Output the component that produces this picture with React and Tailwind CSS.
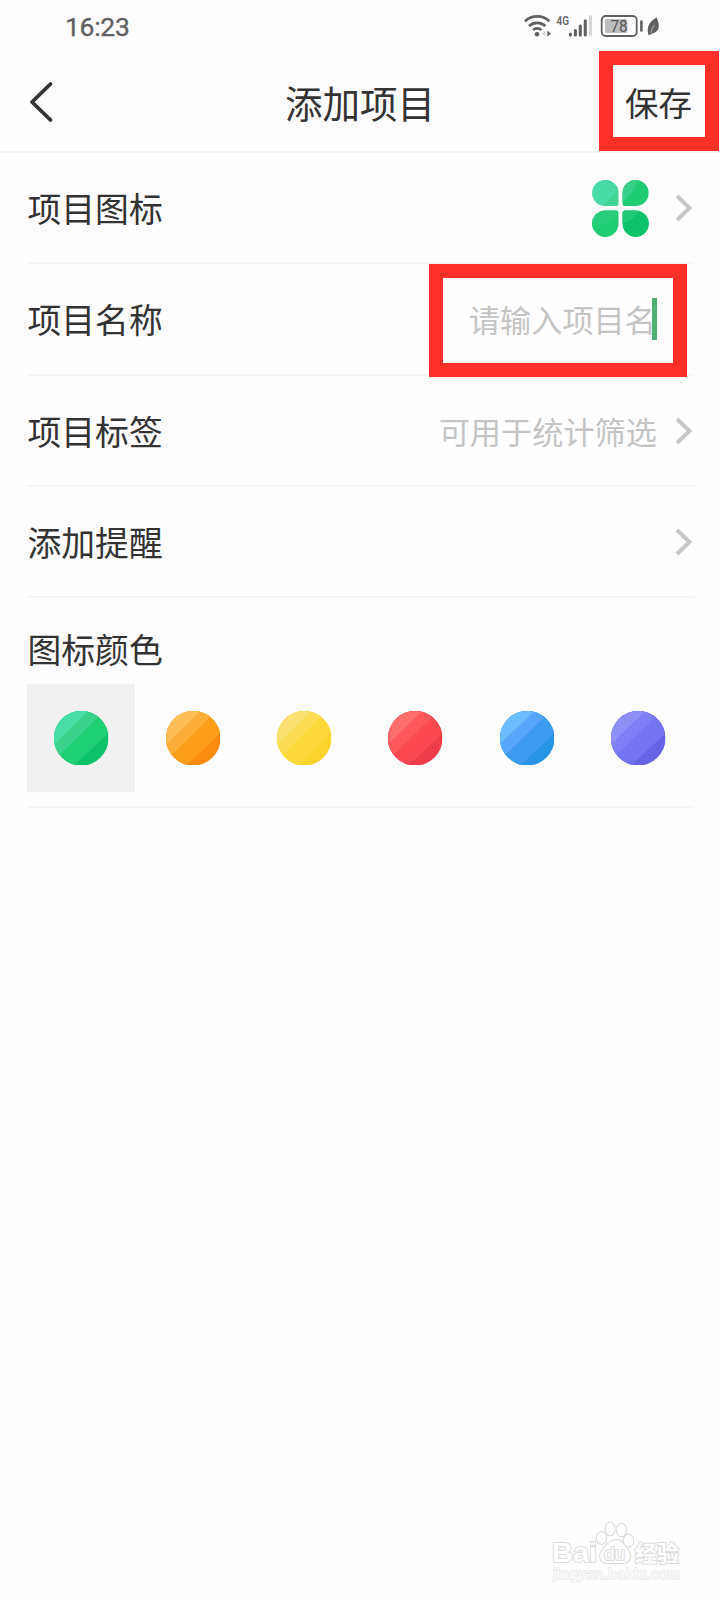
import { useState } from "react";
import clsx from "clsx";

const colors = [
  { name: "green", stops: ["#49dea8", "#3bd28c", "#1fcf73", "#0ac269"] },
  { name: "orange", stops: ["#fdbf58", "#fdae3a", "#fb9f1b", "#fd8a11"] },
  { name: "yellow", stops: ["#fbe172", "#fedd54", "#fdd83a", "#fcd22c"] },
  { name: "red", stops: ["#ff6d6c", "#fe585c", "#fb4852", "#ef3c4b"] },
  { name: "blue", stops: ["#6bbdff", "#56a7fb", "#3c9bee", "#2794e4"] },
  { name: "purple", stops: ["#8f8ff8", "#8080f6", "#7473f0", "#6763e4"] },
];

function StatusBar() {
  return (
    <div className="flex h-[52px] shrink-0 items-center pl-[65px] pr-[59px] text-[#606060]">
      <span className="mt-[3px] font-[Roboto,sans-serif] text-[26.5px] leading-none tracking-[-0.3px] [-webkit-text-stroke:0.3px_#606060]">
        16:23
      </span>
      <svg
        className="ml-auto h-[30px] w-[137px]"
        viewBox="524 11 137 30"
        fill="none"
      >
        <g stroke="#616161" strokeWidth="2.7">
          <path d="M525 21.2c6.800-6.400 17.600-6.400 24.400 0" />
          <path d="M529 26c4.700-4.200 11.700-4.200 16.400 0" />
          <path d="M533 30c2.600-2 5.900-2 8.500 0" />
        </g>
        <circle cx="537" cy="34.200" r="2.300" fill="#616161" />
        <path d="M545.500 31v5l-3.500-2.500z" fill="#cfcfcf" />
        <path d="M547.300 30.500v6.300l3.700-3.100z" fill="#616161" />
        <text
          x="556.500"
          y="24.600"
          fontSize="13.500"
          fontWeight="600"
          textLength="12.500"
          lengthAdjust="spacingAndGlyphs"
          fontFamily="Roboto, sans-serif"
          fill="#666"
        >
          4G
        </text>
        <g strokeWidth="3.100" strokeLinecap="round">
          <path
            d="M570.400 34v1M575.400 30.500v4.500M580.300 26v9M585.300 20.800V35"
            stroke="#616161"
          />
          <path d="M590.400 16.500V35" stroke="#d5d5d5" />
        </g>
        <rect
          x="601.700"
          y="16"
          width="35"
          height="20"
          rx="4"
          stroke="#616161"
          strokeWidth="1.800"
        />
        <rect x="605" y="19" width="22.500" height="14" rx="2" fill="#bdbdbd" />
        <text
          x="619"
          y="32.200"
          fontSize="16"
          textAnchor="middle"
          textLength="17"
          lengthAdjust="spacingAndGlyphs"
          fontFamily="Roboto, sans-serif"
          fill="#555"
        >
          78
        </text>
        <path
          d="M641.400 21.500v9"
          stroke="#616161"
          strokeWidth="2.600"
          strokeLinecap="round"
        />
        <path
          d="M656.500 17.500c3.500 6.500 3.500 14-3 15.500l-4.800 2.200c-1.800-5.200-2.200-11.700 7.800-17.700z"
          fill="#616161"
        />
        <path d="M650.800 33c.4-3 1.700-5.500 3.700-8" stroke="#e4e4e4" strokeWidth=".7" />
      </svg>
    </div>
  );
}

function Chevron() {
  return (
    <svg className="h-[28px] w-[18px]" viewBox="0 0 18 28" fill="none">
      <path d="M2 2l12.500 12L2 26" stroke="#c7c7c7" strokeWidth="4" />
    </svg>
  );
}

function CloverIcon() {
  return (
    <svg className="h-[57px] w-[57px]" viewBox="0 0 57 57">
      <defs>
        <clipPath id="petalA">
          <path d="M13.300 0A13.200 13.200 0 0 1 26.500 13.200V23.500a2.500 2.500 0 0 1-2.500 2.500H13.300A13 13 0 0 1 13.300 0z" />
        </clipPath>
        <clipPath id="petalB">
          <path d="M43.700 0A13 13 0 0 1 43.700 26H33a2.500 2.500 0 0 1-2.500-2.500V13.200A13.200 13.200 0 0 1 43.700 0z" />
        </clipPath>
        <clipPath id="petalC">
          <path d="M13.300 30.500H24a2.500 2.500 0 0 1 2.500 2.500V43.700A13.200 13.200 0 1 1 13.300 30.500z" />
        </clipPath>
        <clipPath id="petalD">
          <path d="M33 30.500H43.700A13.200 13.200 0 1 1 30.500 43.700V33a2.500 2.500 0 0 1 2.500-2.500z" />
        </clipPath>
      </defs>
      <g clipPath="url(#petalA)">
        <path d="M0 0h27v27H0z" fill="#40d497" />
        <path d="M0 0h27v9L9 27H0z" fill="#49dba7" />
      </g>
      <g clipPath="url(#petalB)">
        <path d="M30 0h27v27H30z" fill="#1fcc72" />
        <path d="M30 0h15q-3 14-15 22z" fill="#38d089" />
      </g>
      <g clipPath="url(#petalC)">
        <path d="M0 30h27v27H0z" fill="#1fcd72" />
        <path d="M0 30h27q-8 14-27 17z" fill="#28ce79" />
      </g>
      <g clipPath="url(#petalD)">
        <path d="M30 30h27v27H30z" fill="#0bc268" />
        <path d="M30 30h19q-7 10-19 14z" fill="#1dc973" />
      </g>
    </svg>
  );
}

function Row({ label, children }) {
  return (
    <div className="relative flex h-[111.3px] items-center border-b-2 border-[#f6f6f6] pt-[1px]">
      <span className="pl-[0.5px] text-[33.800px] leading-[40px]">{label}</span>
      <div className="ml-auto flex items-center">{children}</div>
    </div>
  );
}

function ColorDot({ name, stops }) {
  return (
    <svg className="h-[54.500px] w-[54.500px]" viewBox="0 0 54 54">
      <clipPath id={`dot-${name}`}>
        <circle cx="27" cy="27" r="27" />
      </clipPath>
      <g clipPath={`url(#dot-${name})`}>
        <path d="M0 0h54v54H0z" fill={stops[3]} />
        <path d="M0 0h54v22L20 54H0z" fill={stops[2]} />
        <path d="M0 0h50L0 49z" fill={stops[1]} />
        <path d="M0 0h34L0 33z" fill={stops[0]} />
      </g>
    </svg>
  );
}

function Watermark() {
  return (
    <svg
      className="absolute bottom-[12px] right-[36px] h-[70px] w-[134px]"
      viewBox="550 1518 134 70"
      fill="#fff"
      stroke="#dcdcdc"
      strokeWidth="1.100"
    >
      <g fontWeight="700" strokeWidth="2" paintOrder="stroke">
        <text
          x="552"
          y="1562"
          fontSize="28.500"
          textLength="45"
          lengthAdjust="spacingAndGlyphs"
          fontFamily="Liberation Sans, sans-serif"
        >
          Bai
        </text>
        <text
          x="635"
          y="1560.500"
          fontSize="22"
          textLength="44"
          fontFamily="Noto Sans CJK SC, sans-serif"
        >
          经验
        </text>
      </g>
      <ellipse cx="601.500" cy="1538" rx="5.200" ry="6.500" />
      <ellipse cx="610" cy="1529" rx="5" ry="6.800" />
      <ellipse cx="621.500" cy="1530" rx="5" ry="6.800" />
      <ellipse cx="628.500" cy="1540.500" rx="5.200" ry="6.500" />
      <path d="M616 1539.500c6 0 8.500 5 11.500 9 5 6 3.500 15-4.500 15h-15.500c-8.500 0-10-9-4.500-15 3.500-3.500 6-9 13-9z" />
      <text
        x="614.500"
        y="1560"
        fontSize="18.500"
        textAnchor="middle"
        paintOrder="stroke"
        strokeWidth="2.200"
        fontFamily="Liberation Sans, sans-serif"
      >
        du
      </text>
      <text
        x="553"
        y="1579"
        fontSize="14.500"
        textLength="127"
        stroke="#e8e8e8"
        strokeWidth="1.600"
        paintOrder="stroke"
        fontFamily="Liberation Sans, sans-serif"
      >
        jingyan.baidu.com
      </text>
    </svg>
  );
}

export default function App() {
  const [selected, setSelected] = useState("green");

  return (
    <div className="relative flex h-[1600px] w-[720px] flex-col overflow-hidden bg-[#fefefe] font-['Noto_Sans_CJK_SC',sans-serif] text-[#333]">
      <StatusBar />

      <header className="relative grid h-[101px] shrink-0 grid-cols-[1fr_auto_1fr] items-center border-b-2 border-[#f4f4f4] px-[28px]">
        <button>
          <svg className="h-[42px] w-[26px]" viewBox="0 0 26 42" fill="none">
            <path
              d="M22.500 3L4 21l18.500 18"
              stroke="#333"
              strokeWidth="3.800"
              strokeLinecap="round"
              strokeLinejoin="round"
            />
          </svg>
        </button>
        <h1 className="text-[37.500px] leading-[44px]">添加项目</h1>
        <button className="justify-self-end text-[33.500px] leading-[40px]">
          保存
        </button>
        <div className="absolute -top-[1px] right-[1px] h-[100px] w-[120px] border-[14px] border-[#fe3029]" />
      </header>

      <main className="pl-[27px] pr-[26px]">
        <Row label="项目图标">
          <CloverIcon />
          <div className="ml-[26px] mr-[1px]">
            <Chevron />
          </div>
        </Row>
        <Row label="项目名称">
          <span className="text-[31.200px] leading-[40px] text-[#c4c4c4]">
            请输入项目名
          </span>
          <span className="-ml-[4px] mr-[37px] h-[42px] w-[5px] bg-[#4eb073]" />
          <div className="absolute right-[7px] top-0 h-[113px] w-[258px] border-[14px] border-[#fe3029]" />
        </Row>
        <Row label="项目标签">
          <span className="mr-[18px] text-[31.200px] leading-[40px] text-[#c4c4c4]">
            可用于统计筛选
          </span>
          <div className="mr-[1px]">
            <Chevron />
          </div>
        </Row>
        <Row label="添加提醒">
          <div className="mr-[1px]">
            <Chevron />
          </div>
        </Row>

        <section className="h-[210px] border-b-2 border-[#f6f6f6] pt-[31px]">
          <h2 className="pl-[0.5px] text-[33.800px] leading-[40px]">图标颜色</h2>
          <div className="mt-[15px] flex gap-[3.400px]">
            {colors.map((color) => (
              <button
                key={color.name}
                onClick={() => setSelected(color.name)}
                className={clsx(
                  "flex h-[108px] w-[108px] shrink-0 items-center justify-center pl-[1px]",
                  selected === color.name && "bg-[#f1f1f1]"
                )}
              >
                <ColorDot {...color} />
              </button>
            ))}
          </div>
        </section>
      </main>

      <Watermark />
    </div>
  );
}
